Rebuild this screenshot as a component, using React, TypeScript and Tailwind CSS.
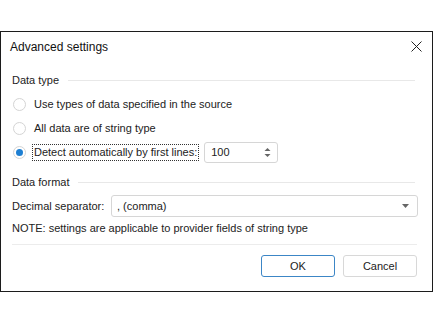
import React, { useState } from 'react';

const font = { fontFamily: '"Liberation Sans", Arial, sans-serif' };

const Radio: React.FC<{ checked: boolean }> = ({ checked }) => (
  <span className="w-[13px] h-[13px] rounded-full border border-[#d4d4d4] bg-white flex items-center justify-center shrink-0">
    {checked && <span className="w-[7px] h-[7px] rounded-full bg-[#1e7fd2]" />}
  </span>
);

const GroupHeader: React.FC<{ title: string }> = ({ title }) => (
  <div className="h-[20px] flex items-center gap-[9px]">
    <span>{title}</span>
    <div className="flex-1 h-px bg-[#e8e8e8] mr-[3px]" />
  </div>
);

export default function App() {
  const [mode, setMode] = useState(2);
  const options = [
    'Use types of data specified in the source',
    'All data are of string type',
    'Detect automatically by first lines:',
  ];

  return (
    <div className="w-[447px] h-[324px] bg-white pt-[31px] text-[11px] text-[#222]" style={font}>
      <div className="w-[433px] h-[261px] border border-[#1c1c1c] bg-white flex flex-col">
        <div className="h-[30px] flex items-center justify-between pl-[9px] pr-[10px]">
          <span className="text-[12px] text-[#111]">Advanced settings</span>
          <svg width="11" height="11" viewBox="0 0 11 11" className="-mt-[1px]">
            <path d="M0.5 0.5 L10.5 10.5 M10.5 0.5 L0.5 10.5" stroke="#222" strokeWidth="1" />
          </svg>
        </div>

        <div className="flex flex-col pl-[11px] pr-[14px] mt-[8px]">
          <GroupHeader title="Data type" />
          <div className="mt-[2px]" />
          {options.map((label, i) => (
            <div key={i} className="h-[24px] flex items-center" onClick={() => setMode(i)}>
              <span className="ml-[1px]">
                <Radio checked={mode === i} />
              </span>
              <span
                className={
                  'ml-[6px] px-[1px] leading-[15px] whitespace-nowrap ' +
                  (i === 2 ? 'border border-dotted border-[#333]' : 'border border-transparent')
                }
              >
                {label}
              </span>
              {i === 2 && (
                <div className="ml-[5px] w-[74px] h-[21px] border border-[#d6d6d6] rounded-[3px] flex items-center justify-between pl-[6px] pr-[6px]">
                  <span>100</span>
                  <svg width="7" height="11" viewBox="0 0 7 11">
                    <path d="M3.5 1 L6.5 4 L0.5 4 Z" fill="#666" />
                    <path d="M3.5 10 L6.5 7 L0.5 7 Z" fill="#666" />
                  </svg>
                </div>
              )}
            </div>
          ))}

          <div className="mt-[8px]">
            <GroupHeader title="Data format" />
          </div>
          <div className="mt-[3px] h-[22px] flex items-center">
            <span className="w-[99px] shrink-0 whitespace-nowrap">Decimal separator:</span>
            <div className="flex-1 h-[22px] border border-[#d6d6d6] rounded-[3px] flex items-center justify-between pl-[5px] pr-[8px]">
              <span>, (comma)</span>
              <svg width="7" height="4" viewBox="0 0 7 4">
                <path d="M0 0 L7 0 L3.5 4 Z" fill="#666" />
              </svg>
            </div>
          </div>
          <div className="mt-[3px] h-[16px] flex items-center whitespace-nowrap">
            NOTE: settings are applicable to provider fields of string type
          </div>

          <div className="mt-[8px] h-px bg-[#ececec] mr-[1px]" />

          <div className="mt-[10px] flex justify-end gap-[8px] mr-[1px]">
            <button className="w-[74px] h-[22px] border border-[#3c86c6] rounded-[3px] bg-white text-[11px] text-[#222]">
              OK
            </button>
            <button className="w-[74px] h-[22px] border border-[#d8d8d8] rounded-[3px] bg-white text-[11px] text-[#222]">
              Cancel
            </button>
          </div>
        </div>
      </div>
    </div>
  );
}
